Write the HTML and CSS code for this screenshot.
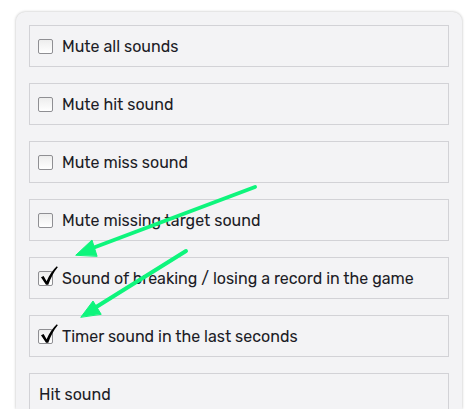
FILE: index.html
```html
<!DOCTYPE html>
<html>
<head>
<meta charset="utf-8">
<link rel="stylesheet" href="styles.css">
</head>
<body>
<div class="panel">
  <label class="row"><span class="box"></span><span class="txt">Mute all sounds</span></label>
  <label class="row"><span class="box"></span><span class="txt">Mute hit sound</span></label>
  <label class="row"><span class="box"></span><span class="txt">Mute miss sound</span></label>
  <label class="row"><span class="box"></span><span class="txt">Mute missing target sound</span></label>
  <label class="row"><span class="box checked"><svg class="tick" viewBox="0 0 21 21"><path d="M3 12.3 L5.6 11 L8.6 16.2 Q12.5 7 18.8 1.2 L19.8 2.3 Q14.2 8.8 10.3 19.8 L8 19.8 Z" fill="#000"/></svg></span><span class="txt">Sound of breaking / losing a record in the game</span></label>
  <label class="row"><span class="box checked"><svg class="tick" viewBox="0 0 21 21"><path d="M3 12.3 L5.6 11 L8.6 16.2 Q12.5 7 18.8 1.2 L19.8 2.3 Q14.2 8.8 10.3 19.8 L8 19.8 Z" fill="#000"/></svg></span><span class="txt">Timer sound in the last seconds</span></label>
  <div class="row plain"><span class="txt">Hit sound</span></div>
</div>
<svg class="arrows" viewBox="0 0 475 409" width="475" height="409">
  <g stroke="#0ef57c" stroke-width="4" stroke-linecap="round" fill="#0ef57c">
    <line x1="255" y1="187" x2="90" y2="249"/>
    <polygon points="76,255 92,240 97,256" stroke-width="1"/>
    <line x1="186" y1="251" x2="93" y2="309"/>
    <polygon points="81,317 93,301 101,314" stroke-width="1"/>
  </g>
</svg>
</body>
</html>
```
FILE: styles.css
```css
html, body {
  margin: 0;
  padding: 0;
  background: #ffffff;
}
body {
  padding: 12px 13px 0 16px;
  font-family: "Rubik", "Inter", "Noto Sans", sans-serif;
  color: #1c1c26;
  height: 409px;
  box-sizing: border-box;
  overflow: hidden;
  display: flex;
  flex-direction: column;
}
.panel {
  flex: 1;
  min-height: 0;
  overflow: hidden;
  background: #f3f3f5;
  border-radius: 9px 9px 0 0;
  box-shadow: 0 0 3px rgba(0,0,0,0.28);
  padding: 13px 13px 0 13px;
  display: flex;
  flex-direction: column;
  gap: 16px;
}
.row {
  display: flex;
  align-items: center;
  flex: none;
  height: 42px;
  box-sizing: border-box;
  border: 1px solid #d2d2d6;
  padding-left: 8px;
  gap: 9px;
  font-size: 16px;
  font-weight: 400;
}
.row.plain {
  padding-left: 9px;
}
.box {
  position: relative;
  width: 15px;
  height: 15px;
  box-sizing: border-box;
  border: 1px solid #8f8f93;
  background: linear-gradient(#ededed, #ffffff);
  border-radius: 2px;
  flex: none;
}
.tick {
  position: absolute;
  left: -1px;
  top: -7px;
  width: 21px;
  height: 21px;
}
.arrows {
  position: absolute;
  left: 0;
  top: 0;
  pointer-events: none;
}
```
